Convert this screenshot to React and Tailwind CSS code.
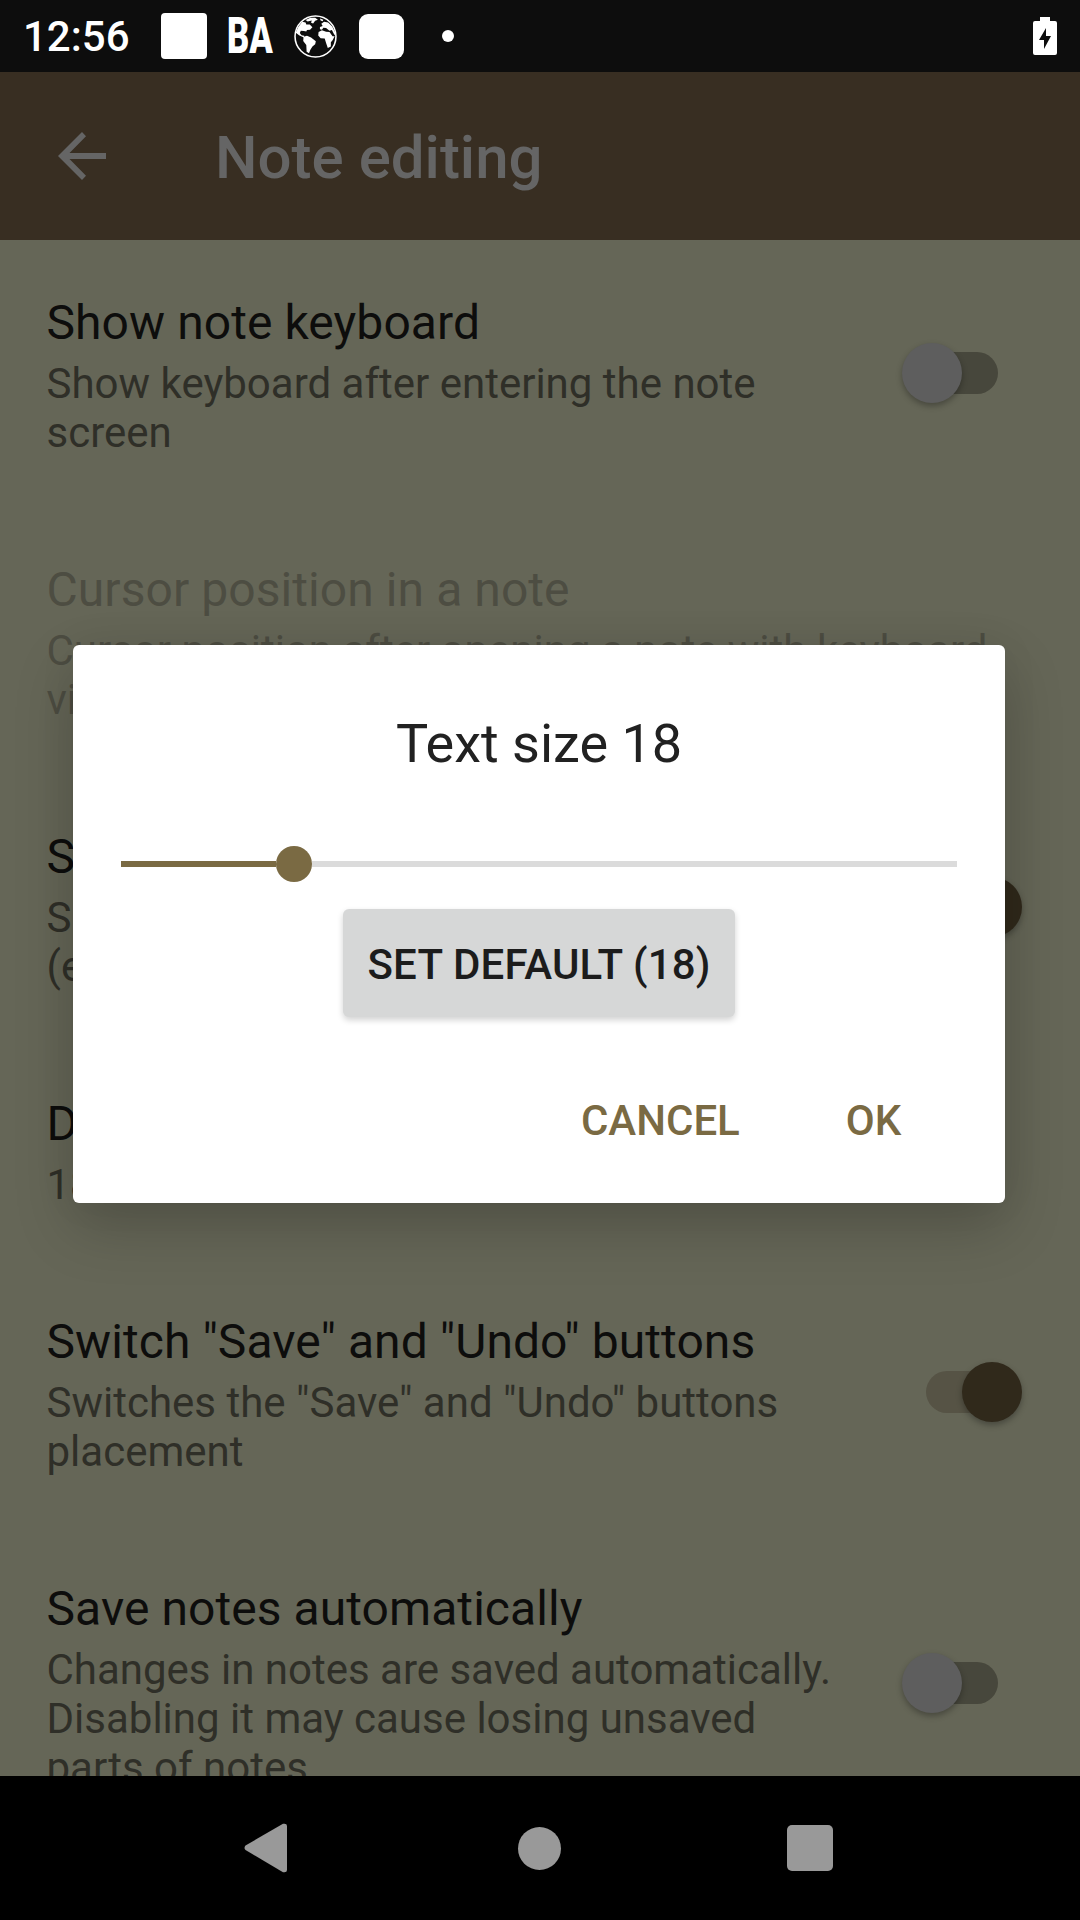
function Globe() {
  return (
    <svg viewBox="0 0 126 126" className="ml-[20px] size-[43px] shrink-0" fill="white">
      <circle cx="63" cy="63" r="60" fill="none" stroke="white" strokeWidth="4.5" />
      <path d="M5 52 12 36 24 20 34 22 36 28 46 28 54 36 47 43 38 44 36 48 29 47 20 46 17 53 22 59 30 61 29 66 16 60Z" />
      <path d="M28 64 38 61 50 66 64 77 62 86 54 92 48 102 44 112 37 108 36 88 27 76Z" />
      <path d="M34 15 48 8 62 8 70 14 62 17 56 25 50 23 52 16 40 19Z" />
      <path d="M76 10 86 14 84 18 78 16ZM76 42 76 35 84 32 80 26 88 20 100 22 112 34 120 50 122 62 117 56 111 44 104 46 94 38 86 37 82 43Z" />
      <path d="M72 50 82 45 94 49 104 50 113 62 119 62 113 74 108 80 108 92 99 97 94 82 90 69 78 68 71 60Z" />
    </svg>
  );
}

function StatusBar() {
  return (
    <header className="flex h-[72px] shrink-0 items-center bg-[#0d0d0d] pl-[23px] pr-[23px] text-white">
      <span className="w-[107px] pt-[2px] text-[42px] leading-[72px] font-medium">12:56</span>
      <span className="ml-[31px] h-[46px] w-[46px] rounded-[4px] bg-white" />
      <span className="ml-[20px] w-[47px] whitespace-nowrap">
        <span className="inline-block origin-left scale-x-[0.69] text-[50px] leading-[72px] font-black">BA</span>
      </span>
      <Globe />
      <span className="ml-[22px] h-[45px] w-[45px] rounded-[9px] bg-white" />
      <span className="ml-[38px] size-[12px] rounded-full bg-white" />
      <svg viewBox="0 0 24 40" className="ml-auto h-[40px] w-[24px]" fill="white">
        <path d="M7 1H17V5H22Q24 5 24 7V37Q24 39 22 39H2Q0 39 0 37V7Q0 5 2 5H7Z" />
        <path d="M13 12 6 24H11V33L18 20H13Z" fill="#0d0d0d" />
      </svg>
    </header>
  );
}

function Toggle({ on }) {
  return on ? (
    <div className="relative mb-[2px] flex h-[60px] w-[120px] shrink-0 items-center justify-center">
      <div className="h-[42px] w-[72px] rounded-full bg-[#565345]" />
      <div className="absolute right-0 size-[60px] rounded-full bg-[#30291b] shadow-[0_3px_6px_rgba(0,0,0,0.3)]" />
    </div>
  ) : (
    <div className="relative mb-[2px] flex h-[60px] w-[120px] shrink-0 items-center justify-center">
      <div className="h-[42px] w-[72px] rounded-full bg-[#47473c]" />
      <div className="absolute left-0 size-[60px] rounded-full bg-[#5e5e5e] shadow-[0_3px_6px_rgba(0,0,0,0.3)]" />
    </div>
  );
}

function Preference({ title, lines, toggle, disabled }) {
  return (
    <section className="flex shrink-0 items-center justify-between pr-[58px] pl-[46.5px]">
      <div className="pt-[55px] pb-[50px] whitespace-nowrap">
        <h2 className={disabled ? "text-[48px] leading-[56px] tracking-[0.07px] text-[#4d4d42]" : "text-[48px] leading-[56px] tracking-[0.07px] text-[#0d0d0c]"}>{title}</h2>
        <div className={disabled ? "mt-[8px] text-[42px] leading-[49px] text-[#4d4d42]" : "mt-[8px] text-[42px] leading-[49px] text-[#2f2f28]"}>
          {lines.map((line) => (
            <p key={line}>{line}</p>
          ))}
        </div>
      </div>
      {toggle && <Toggle on={toggle === "on"} />}
    </section>
  );
}

const preferences = [
  { title: "Show note keyboard", lines: ["Show keyboard after entering the note", "screen"], toggle: "off" },
  { title: "Cursor position in a note", lines: ["Cursor position after opening a note with keyboard", "vi"], disabled: true },
  { title: "S", lines: ["S", "(e"], toggle: "on" },
  { title: "D", lines: ["18"] },
  { title: 'Switch "Save" and "Undo" buttons', lines: ['Switches the "Save" and "Undo" buttons', "placement"], toggle: "on" },
  { title: "Save notes automatically", lines: ["Changes in notes are saved automatically.", "Disabling it may cause losing unsaved", "parts of notes."], toggle: "off" },
];

function TextSizeDialog() {
  return (
    <div className="absolute top-[645px] left-[73.4px] flex h-[558px] w-[931.4px] flex-col items-center rounded-[6px] bg-white shadow-[0_24px_60px_rgba(0,0,0,0.2),0_0_40px_rgba(0,0,0,0.05)]">
      <h2 className="mt-[67px] text-[54px] leading-[64px] text-[#212121]">Text size 18</h2>
      <div className="mt-[70px] flex h-[36px] w-[836px] items-center">
        <div className="h-[6px] w-[155px] bg-[#7a6a43]" />
        <div className="size-[36px] rounded-full bg-[#7a6a43]" />
        <div className="h-[6px] flex-1 bg-[#dbdbdb]" />
      </div>
      <button className="mt-[27px] h-[108px] w-[392px] rounded-[6px] bg-[#d6d7d7] pt-[2px] text-[42px] font-medium tracking-[0.22px] whitespace-nowrap text-[#1c1c1c] shadow-[0_3px_6px_rgba(0,0,0,0.18)]">
        SET DEFAULT (18)
      </button>
      <div className="mt-[79px] flex w-full justify-end gap-[106px] pr-[103.5px] text-[42px] leading-[49px] font-medium text-[#7a6a43]">
        <button>CANCEL</button>
        <button>OK</button>
      </div>
    </div>
  );
}

export default function App() {
  return (
    <div className="relative flex h-[1920px] w-[1080px] flex-col overflow-hidden bg-black font-['Roboto',sans-serif]">
      <StatusBar />
      <div className="flex h-[168px] shrink-0 items-center bg-[#382e22] pl-[58px]">
        <svg viewBox="0 0 48 48" className="size-[48px]" fill="#656565">
          <path d="M48 21H11.5L28 4.2 24 0 0 24 24 48 28 43.8 11.5 27H48Z" />
        </svg>
        <h1 className="ml-[109px] pt-[4px] text-[60px] leading-[72px] font-medium text-[#656565]">Note editing</h1>
      </div>
      <main className="flex h-[1536px] shrink-0 flex-col overflow-hidden bg-[#656657]">
        {preferences.map((preference) => (
          <Preference key={preference.title} {...preference} />
        ))}
      </main>
      <nav className="flex h-[144px] shrink-0 items-center bg-black pl-[244px]">
        <svg viewBox="0 0 44 50" className="h-[50px] w-[44px]" fill="#999999">
          <path d="M1.5 22.5 39 .8Q43 0 43 3V47Q43 50 39 49.2L1.5 27Q-.5 25 1.5 22.5Z" />
        </svg>
        <span className="ml-[229.5px] size-[43px] rounded-full bg-[#999999]" />
        <span className="ml-[226px] size-[46px] rounded-[5px] bg-[#999999]" />
      </nav>
      <TextSizeDialog />
    </div>
  );
}
